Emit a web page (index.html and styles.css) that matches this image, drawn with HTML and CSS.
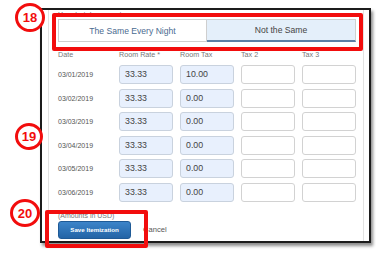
FILE: index.html
```html
<!DOCTYPE html>
<html>
<head>
<meta charset="utf-8">
<link rel="stylesheet" href="styles.css">
</head>
<body>
<div class="frame">
  <div class="panel">
    <div class="question">Your hotel room rate was:</div>
    <div class="toggle">
      <div class="opt">The Same Every Night</div>
      <div class="opt active">Not the Same</div>
    </div>
    <div class="grid head">
      <div>Date</div><div>Room Rate *</div><div>Room Tax</div><div>Tax 2</div><div>Tax 3</div>
    </div>
    <div class="rows">
      <div class="grid row"><div class="date">03/01/2019</div><div class="in fill">33.33</div><div class="in fill">10.00</div><div class="in"></div><div class="in"></div></div>
      <div class="grid row"><div class="date">03/02/2019</div><div class="in fill">33.33</div><div class="in fill">0.00</div><div class="in"></div><div class="in"></div></div>
      <div class="grid row"><div class="date">03/03/2019</div><div class="in fill">33.33</div><div class="in fill">0.00</div><div class="in"></div><div class="in"></div></div>
      <div class="grid row"><div class="date">03/04/2019</div><div class="in fill">33.33</div><div class="in fill">0.00</div><div class="in"></div><div class="in"></div></div>
      <div class="grid row"><div class="date">03/05/2019</div><div class="in fill">33.33</div><div class="in fill">0.00</div><div class="in"></div><div class="in"></div></div>
      <div class="grid row"><div class="date">03/06/2019</div><div class="in fill">33.33</div><div class="in fill">0.00</div><div class="in"></div><div class="in"></div></div>
    </div>
    <div class="note">(Amounts in USD)</div>
    <div class="actions">
      <div class="btn">Save Itemization</div>
      <div class="cancel">Cancel</div>
    </div>
  </div>
</div>
<div class="hl hl-toggle"></div>
<div class="hl hl-save"></div>
<div class="badge b18">18</div>
<div class="badge b19">19</div>
<div class="badge b20">20</div>
</body>
</html>
```
FILE: styles.css
```css
html, body {
  margin: 0;
  padding: 0;
}
body {
  position: relative;
  width: 376px;
  height: 253px;
  overflow: hidden;
  background: #fff;
  font-family: "Liberation Sans", Arial, sans-serif;
}
.frame {
  box-sizing: border-box;
  margin: 8px 0 0 40px;
  width: 331px;
  height: 235px;
  border: 2px solid #1c1c1c;
  box-shadow: 2px 3px 3px rgba(0, 0, 0, 0.45);
  padding: 0 5px 0 6px;
  overflow: hidden;
  background: #fff;
}
.panel {
  box-sizing: border-box;
  height: 100%;
  border-left: 1px solid #e2e2e2;
  border-right: 1px solid #e2e2e2;
  padding: 0 7px 0 9px;
}
.question {
  height: 9px;
  font-size: 7.5px;
  line-height: 10px;
  color: #777;
  white-space: nowrap;
}
.toggle {
  display: grid;
  grid-template-columns: 1fr 1fr;
  height: 23px;
}
.opt {
  box-sizing: border-box;
  border: 1px solid #cfcfcf;
  display: flex;
  align-items: center;
  justify-content: center;
  font-size: 8.6px;
  color: #4a6b90;
  background: #fff;
}
.opt.active {
  background: #e4effa;
  color: #444;
  border-bottom: 2px solid #5b7fa6;
  border-left: none;
}
.grid {
  display: grid;
  grid-template-columns: 54px 54px 54px 54px 54px;
  column-gap: 7px;
}
.head {
  padding-top: 9px;
  margin-bottom: 6px;
  font-size: 7.2px;
  line-height: 8px;
  color: #777;
}
.rows {
  display: flex;
  flex-direction: column;
  gap: 4.6px;
}
.row {
  height: 19px;
  align-items: center;
}
.date {
  font-size: 7px;
  color: #555;
  white-space: nowrap;
}
.in {
  box-sizing: border-box;
  height: 19px;
  border: 1px solid #d2d2d2;
  border-radius: 3px;
  background: #fff;
  font-size: 8.8px;
  line-height: 17px;
  padding-left: 5px;
  color: #444;
}
.in.fill {
  background: #e8f0fd;
  border-color: #c9d2de;
}
.note {
  margin-top: 9px;
  font-size: 7px;
  line-height: 9px;
  color: #777;
}
.actions {
  display: flex;
  align-items: center;
  gap: 12px;
  margin-top: 1px;
}
.btn {
  box-sizing: border-box;
  width: 73px;
  height: 18px;
  border-radius: 3px;
  border: 1px solid #1f5a96;
  background: linear-gradient(#3c84c9, #2364a6);
  color: #fff;
  font-weight: bold;
  font-size: 6.2px;
  display: flex;
  align-items: center;
  justify-content: center;
}
.cancel {
  font-size: 7.6px;
  color: #555;
}
.hl {
  position: absolute;
  box-sizing: border-box;
  border: 4px solid #f20d0d;
  border-radius: 2px;
}
.hl-toggle {
  left: 52px;
  top: 13px;
  width: 311px;
  height: 38px;
}
.hl-save {
  left: 45px;
  top: 210px;
  width: 103px;
  height: 38px;
}
.badge {
  position: absolute;
  box-sizing: border-box;
  border: 3px solid #f20d0d;
  border-radius: 50%;
  background: #fff;
  color: #f20d0d;
  font-weight: bold;
  font-size: 13px;
  display: flex;
  align-items: center;
  justify-content: center;
}
.b18 {
  left: 15px;
  top: 3px;
  width: 30px;
  height: 29px;
}
.b19 {
  left: 15px;
  top: 123px;
  width: 28px;
  height: 27px;
}
.b20 {
  left: 10px;
  top: 199px;
  width: 30px;
  height: 28px;
}
```
